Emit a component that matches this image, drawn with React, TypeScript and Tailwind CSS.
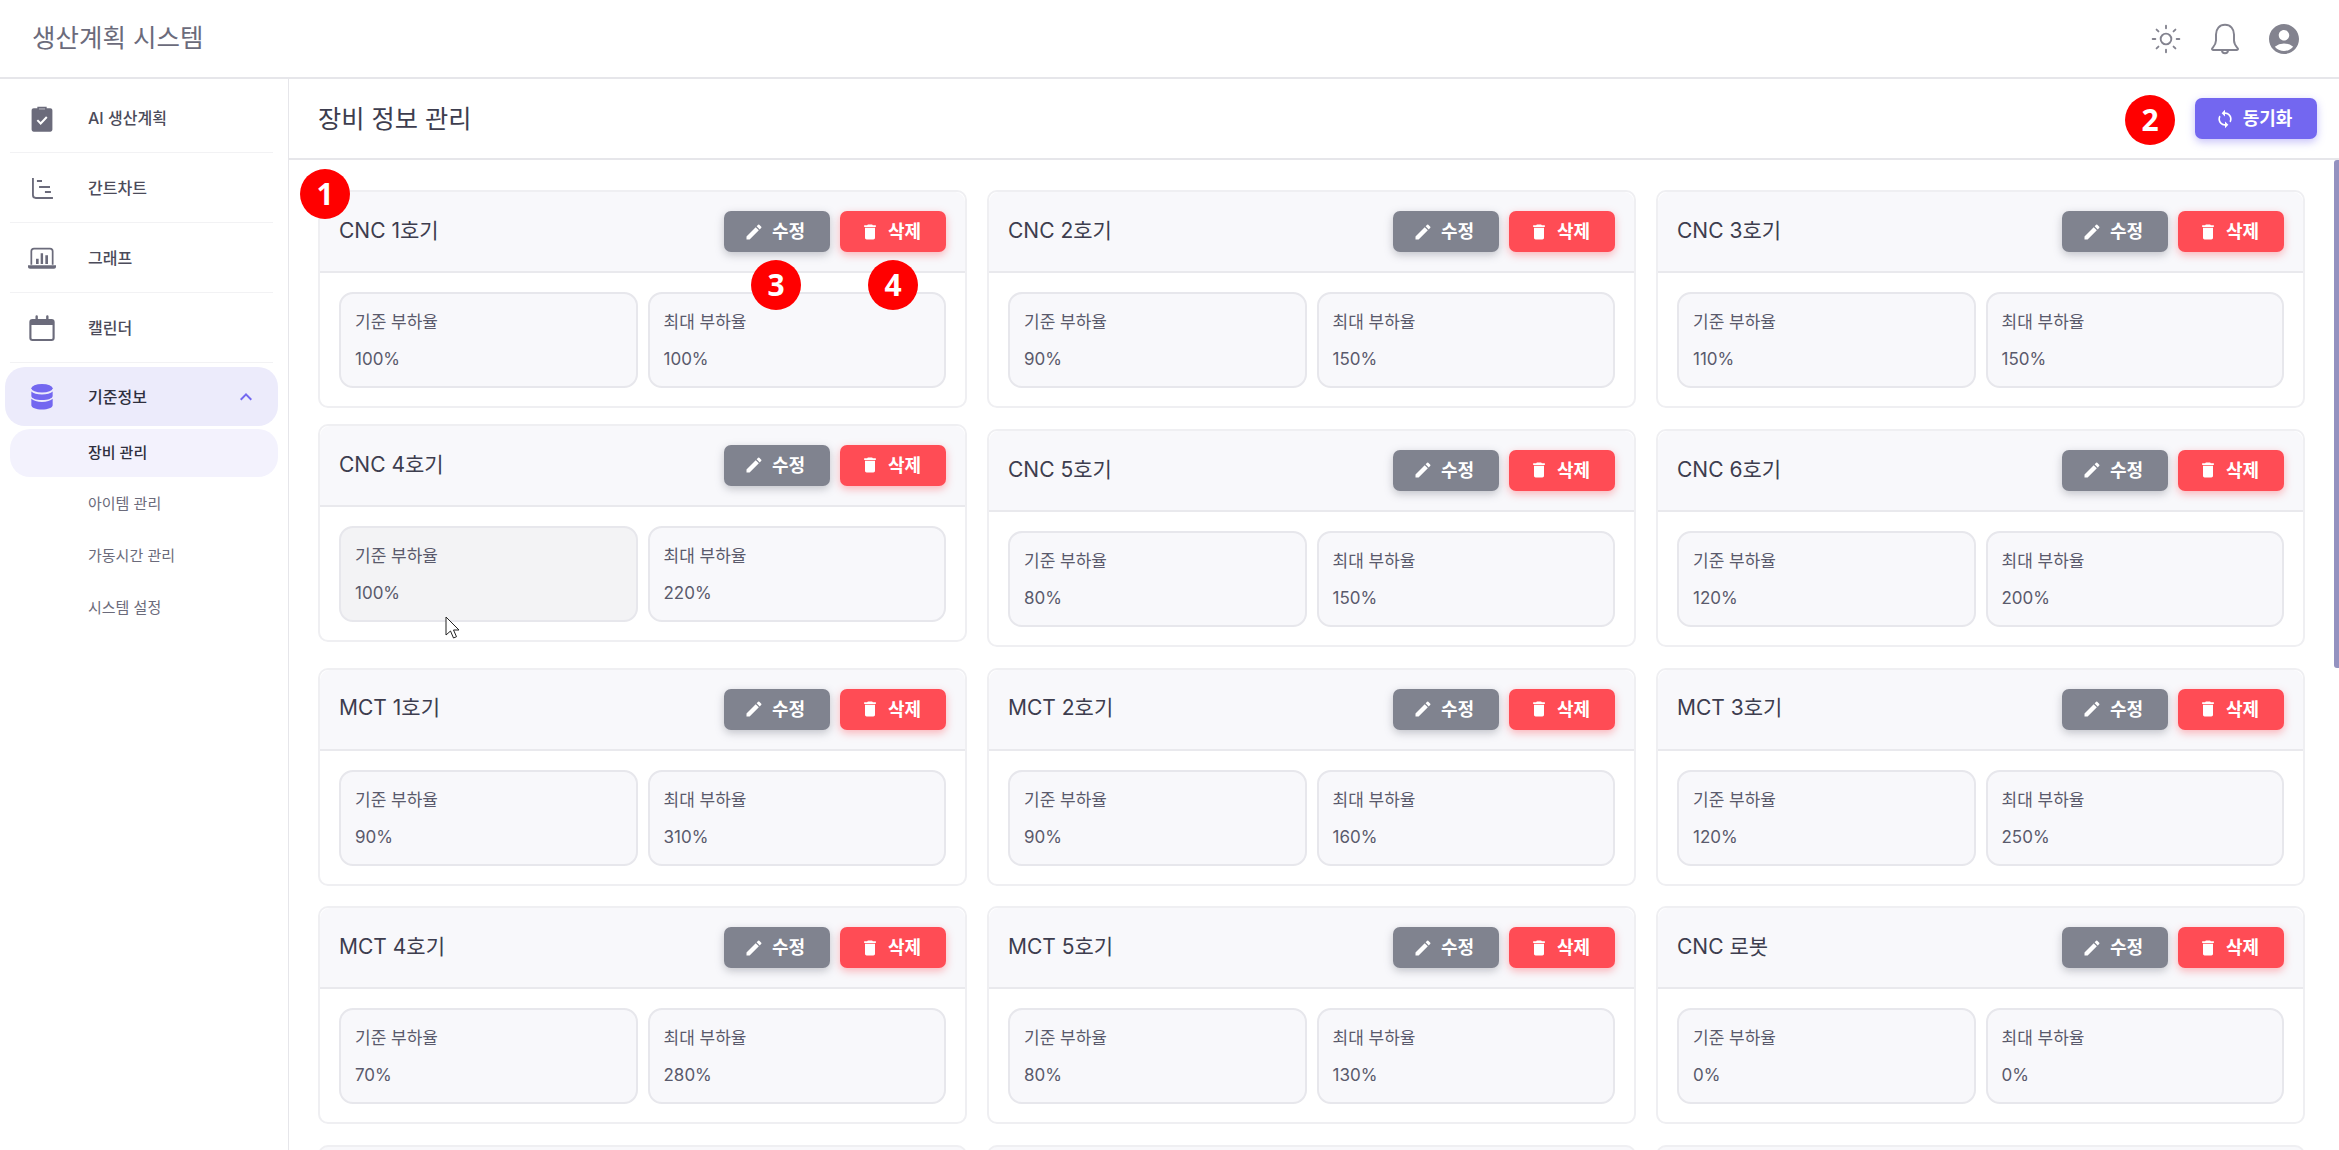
import { MdDelete, MdEdit, MdSync, MdAccountCircle, MdKeyboardArrowUp } from 'react-icons/md';
import { LuSun } from 'react-icons/lu';

interface Machine {
  name: string;
  base: string;
  max: string;
}

const machines: Machine[] = [
  { name: 'CNC 1호기', base: '100%', max: '100%' },
  { name: 'CNC 2호기', base: '90%', max: '150%' },
  { name: 'CNC 3호기', base: '110%', max: '150%' },
  { name: 'CNC 4호기', base: '100%', max: '220%' },
  { name: 'CNC 5호기', base: '80%', max: '150%' },
  { name: 'CNC 6호기', base: '120%', max: '200%' },
  { name: 'MCT 1호기', base: '90%', max: '310%' },
  { name: 'MCT 2호기', base: '90%', max: '160%' },
  { name: 'MCT 3호기', base: '120%', max: '250%' },
  { name: 'MCT 4호기', base: '70%', max: '280%' },
  { name: 'MCT 5호기', base: '80%', max: '130%' },
  { name: 'CNC 로봇', base: '0%', max: '0%' },
];

const ClipboardIcon = () => (
  <svg viewBox="0 0 24 24" className="w-8 h-8" fill="#6b6b7b">
    <path d="M8.5 3.5h7v1.200h2.700c.9 0 1.600.7 1.600 1.600v14.400c0 .9-.7 1.600-1.600 1.600H5.800c-.9 0-1.600-.7-1.600-1.600V6.300c0-.9.7-1.600 1.600-1.600h2.700V3.500z" />
    <path d="M8.500 13.600l2.500 2.500 4.600-4.800" fill="none" stroke="#fff" strokeWidth="1.500" />
    <path d="M9.700 4.600h4.600v1.200H9.700z" fill="#fff" opacity=".35" />
  </svg>
);

const GanttIcon = () => (
  <svg viewBox="0 0 24 24" className="w-8 h-8" fill="none" stroke="#6b6b7b" strokeWidth="1.400">
    <path d="M5.200 4.500v12.800c0 1.400.8 2.200 2.200 2.200h12.800" />
    <path d="M8.200 6.700H12M9.800 11.200H18M14.200 15h4.500" strokeWidth="1.500" />
  </svg>
);

const GraphIcon = () => (
  <svg viewBox="0 0 24 24" className="w-8 h-8" fill="none" stroke="#6b6b7b">
    <path d="M4 17V7c0-1.200.8-2 2-2h12c1.200 0 2 .8 2 2v10" strokeWidth="1.300" />
    <path d="M1.500 17.500h21v1c0 .9-.6 1.500-1.500 1.500H3c-.9 0-1.500-.6-1.500-1.500z" fill="#6b6b7b" stroke="none" />
    <path d="M7.500 12.500h2v4h-2zM11 8.500h1.800v8H11zM14.500 10h2v6.500h-2z" fill="#6b6b7b" stroke="none" />
  </svg>
);

const CalendarIcon = () => (
  <svg viewBox="0 0 24 24" className="w-8 h-8" fill="none" stroke="#6b6b7b">
    <rect x="3.300" y="6" width="17.400" height="15" rx="1.500" strokeWidth="1.600" />
    <path d="M3.300 7.500c0-1 .6-1.500 1.500-1.500h14.400c.9 0 1.500.5 1.500 1.500v2.300H3.300z" fill="#6b6b7b" stroke="none" />
    <path d="M8 3.300v3.700M16 3.300v3.700" strokeWidth="1.800" strokeLinecap="round" />
  </svg>
);

const DatabaseIcon = () => (
  <svg viewBox="0 0 24 24" className="w-8 h-8" fill="#7367f0">
    <ellipse cx="12" cy="5.500" rx="8" ry="3.200" />
    <path d="M4 7.800v3.400c0 1.800 3.600 3.100 8 3.100s8-1.300 8-3.100V7.800c-1.400 1.500-4.500 2.300-8 2.300s-6.600-.8-8-2.300z" />
    <path d="M4 13.300v4.900c0 1.800 3.600 3.200 8 3.200s8-1.400 8-3.200v-4.900c-1.400 1.500-4.500 2.400-8 2.400s-6.600-.9-8-2.400z" />
  </svg>
);

const BellIcon = () => (
  <svg viewBox="0 0 24 24" className="w-9 h-9" fill="none" stroke="#83838f" strokeWidth="1.300" strokeLinejoin="round">
    <path d="M12 2.500c-3.800 0-6 2.800-6 6.500v4c0 2.500-1.500 4-2.500 5.200-.4.500-.1 1.100.5 1.100h16c.6 0 .9-.6.5-1.100C19.500 17 18 15.500 18 13V9c0-3.700-2.200-6.500-6-6.500z" />
    <path d="M10 19.500c0 1.300.9 2 2 2s2-.7 2-2" />
  </svg>
);

const Cursor = () => (
  <svg viewBox="0 0 16 24" className="absolute left-[125px] top-[190px] w-4 h-6 z-10">
    <path d="M1 1v18l4.500-4 3 7 3-1.300-3-6.700H14z" fill="#fff" stroke="#222" strokeWidth="1" strokeLinejoin="round" />
  </svg>
);

const NumberBadge = ({ value, className }: { value: number; className: string }) => (
  <div
    className={`absolute z-20 flex items-center justify-center w-[50px] h-[50px] rounded-full bg-[#ff0000] text-white text-[30px] font-bold leading-none font-['Noto_Sans'] ${className}`}
  >
    {value}
  </div>
);

const menuItems = [
  { label: 'AI 생산계획', icon: <ClipboardIcon /> },
  { label: '간트차트', icon: <GanttIcon /> },
  { label: '그래프', icon: <GraphIcon /> },
  { label: '캘린더', icon: <CalendarIcon /> },
];

const subItems = ['아이템 관리', '가동시간 관리', '시스템 설정'];

const Sidebar = () => (
  <aside className="w-[289px] shrink-0 border-r border-[#e6e6ea] pt-[4px] bg-white">
    {menuItems.map((item) => (
      <div key={item.label} className="ml-[10px] mr-[15px] h-[70px] flex items-center border-b border-[#f2f2f4]">
        <div className="w-[78px] pl-[16px] flex">{item.icon}</div>
        <span className="text-[16px] font-medium text-[#4b4b5a]">{item.label}</span>
      </div>
    ))}
    <div className="mt-[4px] ml-[5px] mr-[10px] h-[59px] flex items-center rounded-[20px] bg-[#ecebfb]">
      <div className="w-[83px] pl-[21px] flex"><DatabaseIcon /></div>
      <span className="flex-1 text-[16px] font-medium text-[#2f2f3e]">기준정보</span>
      <MdKeyboardArrowUp className="w-6 h-6 mr-[20px] text-[#7367f0]" />
    </div>
    <div className="mt-[3px] ml-[10px] mr-[10px] h-[48px] pl-[78px] flex items-center rounded-[20px] bg-[#f3f2fd] text-[15px] font-medium text-[#2f2f3e]">
      장비 관리
    </div>
    <div className="mt-[1px]">
      {subItems.map((label) => (
        <div key={label} className="h-[52px] pl-[88px] flex items-center text-[15px] text-[#6b6b7b]">
          {label}
        </div>
      ))}
    </div>
  </aside>
);

const StatBox = ({ label, value, hovered }: { label: string; value: string; hovered?: boolean }) => (
  <div className={`h-[96px] rounded-[14px] border-2 border-[#e7e7ec] pl-[14px] pt-[16px] ${hovered ? 'bg-[#f3f3f5]' : 'bg-[#f8f8fb]'}`}>
    <div className="text-[17px] leading-[24px] text-[#5a5a6c]">{label}</div>
    <div className="mt-[13px] text-[17px] leading-[24px] text-[#5a5a6c]">{value}</div>
  </div>
);

const MachineCard = ({ machine }: { machine: Machine }) => {
  const lifted = machine.name === 'CNC 4호기';
  return (
    <div className={`relative h-[218px] rounded-[10px] border-2 border-[#efeff2] bg-white ${lifted ? '-translate-y-[5px]' : ''}`}>
      <div className="h-[81px] flex items-center justify-between px-[19px] bg-[#f8f8fb] border-b-2 border-[#e9e9ed] rounded-t-[10px]">
        <h3 className="text-[21px] text-[#3d3d4e] pb-[2px]">{machine.name}</h3>
        <div className="flex gap-[10px]">
          <button className="w-[106px] h-[41px] pr-[5px] flex items-center justify-center gap-[8px] rounded-[7px] bg-[#80838f] text-white text-[18px] font-semibold shadow-[0_3px_8px_rgba(128,131,143,0.45)]">
            <MdEdit className="w-5 h-5" />
            수정
          </button>
          <button className="w-[106px] h-[41px] pr-[5px] flex items-center justify-center gap-[8px] rounded-[7px] bg-[#ff4c55] text-white text-[18px] font-semibold shadow-[0_3px_8px_rgba(255,76,85,0.4)]">
            <MdDelete className="w-5 h-5" />
            삭제
          </button>
        </div>
      </div>
      <div className="grid grid-cols-2 gap-[10px] px-[19px] pt-[19px]">
        <StatBox label="기준 부하율" value={machine.base} hovered={lifted} />
        <StatBox label="최대 부하율" value={machine.max} />
      </div>
      {lifted && <Cursor />}
    </div>
  );
};

// the fifth row is only a few pixels tall on screen, its content is not readable
const PeekCard = () => (
  <div className="h-[218px] rounded-[10px] border-2 border-[#efeff2] bg-[#f8f8fb]" />
);

export default function App() {
  return (
    <div className="relative h-screen overflow-hidden flex flex-col bg-white font-['Inter','Noto_Sans_CJK_KR',sans-serif]">
      <header className="h-[79px] shrink-0 flex items-center justify-between border-b-2 border-[#e6e6ea] pl-[32px] pr-[26px]">
        <span className="text-[25.5px] text-[#6b6b7b]">생산계획 시스템</span>
        <div className="flex items-center text-[#83838f]">
          <div className="w-[59px] flex justify-center"><LuSun className="w-[32px] h-[32px]" strokeWidth={1.4} /></div>
          <div className="w-[59px] flex justify-center"><BellIcon /></div>
          <div className="w-[59px] flex justify-center"><MdAccountCircle className="w-[36px] h-[36px]" /></div>
        </div>
      </header>
      <div className="flex flex-1 min-h-0">
        <Sidebar />
        <main className="relative flex-1 min-w-0 flex flex-col">
          <div className="h-[81px] shrink-0 flex items-center justify-between border-b-2 border-[#e6e6ea] pl-[29px] pr-[22px]">
            <h2 className="text-[25.25px] text-[#3d3d4e] pt-[2px]">장비 정보 관리</h2>
            <button className="w-[122px] h-[41px] pr-[5px] flex items-center justify-center gap-[8px] rounded-[7px] bg-[#7367f0] text-white text-[18px] font-semibold shadow-[0_3px_8px_rgba(115,103,240,0.4)]">
              <MdSync className="w-5 h-5" />
              동기화
            </button>
          </div>
          <div className="relative flex-1 min-h-0 overflow-hidden pl-[29px] pr-[34px] pt-[30px]">
            <div className="grid grid-cols-3 gap-x-[20px] gap-y-[20.75px]">
              {machines.map((m) => (
                <MachineCard key={m.name} machine={m} />
              ))}
              <PeekCard />
              <PeekCard />
              <PeekCard />
            </div>
            <div className="absolute right-0 top-0 w-[5px] h-[508px] rounded-l-[3px] bg-[#9492c0]" />
          </div>
          <NumberBadge value={1} className="left-[11px] top-[90px]" />
          <NumberBadge value={2} className="left-[1836px] top-[16px]" />
          <NumberBadge value={3} className="left-[462px] top-[181px]" />
          <NumberBadge value={4} className="left-[579px] top-[181px]" />
        </main>
      </div>
    </div>
  );
}
